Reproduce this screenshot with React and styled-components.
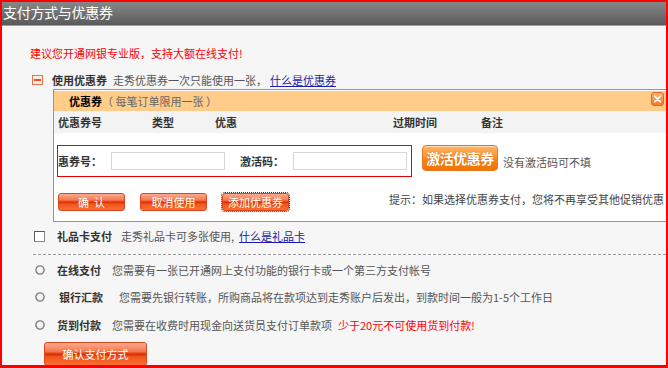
import React from "react";
import styled, { createGlobalStyle, css } from "styled-components";

const Global = createGlobalStyle`
  html, body { margin: 0; padding: 0; background: #fff; }
  body { font-family: "Noto Sans CJK SC", "Noto Sans", sans-serif; font-size: 11px; }
  input { font-family: inherit; }
`;

const Frame = styled.div`
  width: 668px;
  height: 368px;
  box-sizing: border-box;
  border: 2px solid #ff0000;
  border-bottom-width: 3px;
  background: #f6f6f6;
  overflow: hidden;
  font-size: 11px;
  line-height: 16px;
  color: #555;
`;

const TitleBar = styled.div`
  height: 21px;
  padding: 0 0 2px 1px;
  border-bottom: 1px solid #a0a0a0;
  background: linear-gradient(#878787, #5a5a5a);
  color: #fff;
  font-size: 14px;
  line-height: 21px;
  letter-spacing: -0.3px;
`;

const Notice = styled.div`
  margin: 19px 0 0 28px;
  color: #ff0000;
  line-height: 16px;
`;

const Row = styled.div`
  display: flex;
  align-items: center;
  height: 16px;
  margin-top: ${(p) => p.$mt || 0}px;
  padding-left: ${(p) => p.$pl || 0}px;
  white-space: nowrap;
`;

const Label = styled.span`
  font-weight: bold;
  color: #333;
  margin-left: ${(p) => p.$ml || 0}px;
  margin-right: ${(p) => p.$mr || 0}px;
`;

const Desc = styled.span`
  color: ${(p) => (p.$red ? "#ff0000" : "#555")};
  margin-left: ${(p) => p.$ml || 0}px;
`;

const Link = styled.a`
  color: #1a1aa8;
  text-decoration: underline;
  margin-left: ${(p) => p.$ml || 0}px;
  cursor: pointer;
`;

const IconBox = styled.span`
  display: inline-flex;
  margin-right: ${(p) => p.$mr || 0}px;
`;

const CheckBox = styled.span`
  display: inline-block;
  width: 11px;
  height: 11px;
  box-sizing: border-box;
  border: 1px solid #5a5a5a;
  border-right-color: #8a8a8a;
  border-bottom-color: #8a8a8a;
  background: #fff;
  margin-right: 12px;
`;

const Panel = styled.div`
  margin: 1px 0 0 51px;
  width: 616px;
  box-sizing: border-box;
  border: 1px solid #f07a3c;
  background: #fff;
`;

const PanelHead = styled.div`
  margin-top: 1px;
  height: 20px;
  background: #ffcc8a;
  display: flex;
  align-items: center;
  padding-left: 15px;
  color: #666;
`;

const PanelTitle = styled.span`
  font-weight: bold;
  color: #000;
`;

const Close = styled.span`
  margin-left: auto;
  margin-right: 4px;
  align-self: flex-start;
  margin-top: 1px;
  display: inline-flex;
`;

const ColumnRow = styled.div`
  height: 22px;
  background: #f3f3f3;
  display: flex;
  align-items: center;
  padding-left: 4px;
  font-weight: bold;
  color: #333;
`;

const Col = styled.span`
  width: ${(p) => p.$w}px;
  flex: none;
`;

const PanelBody = styled.div`
  padding: 12px 0 9px 3px;
`;

const CodeLine = styled.div`
  display: flex;
  align-items: flex-start;
`;

const CodeBox = styled.div`
  display: flex;
  align-items: center;
  width: 355px;
  height: 32px;
  box-sizing: border-box;
  border: 1px solid #e80000;
`;

const FieldLabel = styled.span`
  font-weight: bold;
  color: #333;
  margin-left: ${(p) => p.$ml || 0}px;
`;

const Field = styled.input`
  width: 114px;
  height: 18px;
  box-sizing: border-box;
  border: 1px solid #d6d6d6;
  background: #fff;
  margin: 0 0 0 9px;
  padding: 0 2px;
  outline: none;
`;

const ActivateButton = styled.button`
  margin-left: 10px;
  width: 76px;
  height: 26px;
  padding: 0;
  border: 1px solid #e8761e;
  border-radius: 4px;
  background: linear-gradient(#ffb666, #ff9430 45%, #ff8414 55%, #f07400);
  color: #fff;
  font-family: inherit;
  font-size: 14px;
  font-weight: bold;
  line-height: 24px;
  letter-spacing: -0.5px;
  text-shadow: 0 0 1px #b85000;
  box-shadow: inset 0 1px 0 rgba(255, 255, 255, 0.5);
`;

const NoCode = styled.span`
  margin: 9px 0 0 5px;
  color: #555;
`;

const BtnRow = styled.div`
  display: flex;
  align-items: center;
  gap: 15px;
  margin-top: 14px;
  padding-left: 1px;
  white-space: nowrap;
`;

const redGloss = css`
  border: 1px solid #d9481c;
  border-radius: 3px;
  background: linear-gradient(
    #fbaa90 0%,
    #f6784f 38%,
    #e84418 47%,
    #d83000 52%,
    #f25420 62%,
    #fa6e30 100%
  );
  color: #fff;
  font-family: inherit;
  font-size: 11px;
  padding: 0;
`;

const SmallButton = styled.button`
  ${redGloss};
  width: 67px;
  height: 18px;
  line-height: 16px;
  ${(p) =>
    p.$focused &&
    css`
      outline: 1px dotted #333;
      outline-offset: 0;
    `}
`;

const Hint = styled.span`
  margin-left: 85px;
  margin-bottom: 5px;
  color: #444;
`;

const Dashed = styled.div`
  margin: 10px 0 0 31px;
  border-top: 1px dashed #9a9a9a;
`;

const PayButton = styled.button`
  ${redGloss};
  display: block;
  margin: 9px 0 0 42px;
  width: 103px;
  height: 24px;
  line-height: 22px;
`;

const MinusIcon = () => (
  <svg width="11" height="10" viewBox="0 0 11 10">
    <rect x="0.5" y="0.5" width="10" height="9" fill="#fdeee6" stroke="#e8704a" />
    <rect x="2" y="4" width="7" height="2" fill="#e8542a" />
  </svg>
);

const RadioIcon = () => (
  <svg width="10" height="10" viewBox="0 0 10 10">
    <defs>
      <radialGradient id="rg" cx="0.4" cy="0.4" r="0.6">
        <stop offset="0" stopColor="#ffffff" />
        <stop offset="1" stopColor="#eaeaea" />
      </radialGradient>
    </defs>
    <circle cx="5" cy="5" r="4.1" fill="url(#rg)" stroke="#7e7e7e" strokeWidth="1.4" />
  </svg>
);

const CloseIcon = () => (
  <svg width="13" height="14" viewBox="0 0 13 14">
    <defs>
      <linearGradient id="cg" x1="0" y1="0" x2="0" y2="1">
        <stop offset="0" stopColor="#ffb070" />
        <stop offset="1" stopColor="#f07a2a" />
      </linearGradient>
    </defs>
    <rect x="0.5" y="0.5" width="12" height="13" rx="2.5" fill="url(#cg)" stroke="#e86a20" />
    <path d="M3.8 4.3 L9.2 9.7 M9.2 4.3 L3.8 9.7" stroke="#fff" strokeWidth="1.8" strokeLinecap="round" />
  </svg>
);

export default function App() {
  return (
    <>
      <Global />
      <Frame>
        <TitleBar>支付方式与优惠券</TitleBar>
        <Notice>建议您开通网银专业版，支持大额在线支付!</Notice>

        <Row $mt={11} $pl={30}>
          <IconBox $mr={9}>
            <MinusIcon />
          </IconBox>
          <Label $mr={6}>使用优惠券</Label>
          <Desc>走秀优惠券一次只能使用一张，</Desc>
          <Link $ml={3}>什么是优惠券</Link>
        </Row>

        <Panel>
          <PanelHead>
            <PanelTitle>优惠券</PanelTitle>（ 每笔订单限用一张 ）
            <Close>
              <CloseIcon />
            </Close>
          </PanelHead>
          <ColumnRow>
            <Col $w={94}>优惠券号</Col>
            <Col $w={63}>类型</Col>
            <Col $w={178}>优惠</Col>
            <Col $w={88}>过期时间</Col>
            <Col $w={40}>备注</Col>
          </ColumnRow>
          <PanelBody>
            <CodeLine>
              <CodeBox>
                <FieldLabel>惠券号：</FieldLabel>
                <Field type="text" />
                <FieldLabel $ml={15}>激活码：</FieldLabel>
                <Field type="text" />
              </CodeBox>
              <ActivateButton>激活优惠券</ActivateButton>
              <NoCode>没有激活码可不填</NoCode>
            </CodeLine>
            <BtnRow>
              <SmallButton>确&nbsp;&nbsp;认</SmallButton>
              <SmallButton>取消使用</SmallButton>
              <SmallButton $focused>添加优惠券</SmallButton>
              <Hint>提示：如果选择优惠券支付，您将不再享受其他促销优惠</Hint>
            </BtnRow>
          </PanelBody>
        </Panel>

        <Row $mt={6} $pl={32}>
          <CheckBox />
          <Label $mr={9}>礼品卡支付</Label>
          <Desc>走秀礼品卡可多张使用,</Desc>
          <Link $ml={5}>什么是礼品卡</Link>
        </Row>

        <Dashed />

        <Row $mt={7} $pl={33}>
          <IconBox $mr={12}>
            <RadioIcon />
          </IconBox>
          <Label $mr={11}>在线支付</Label>
          <Desc>您需要有一张已开通网上支付功能的银行卡或一个第三方支付帐号</Desc>
        </Row>
        <Row $mt={11} $pl={33}>
          <IconBox $mr={12}>
            <RadioIcon />
          </IconBox>
          <Label $ml={2} $mr={16}>银行汇款</Label>
          <Desc>您需要先银行转账，所购商品将在款项达到走秀账户后发出，到款时间一般为1-5个工作日</Desc>
        </Row>
        <Row $mt={12} $pl={33}>
          <IconBox $mr={12}>
            <RadioIcon />
          </IconBox>
          <Label $mr={11}>货到付款</Label>
          <Desc>您需要在收费时用现金向送货员支付订单款项</Desc>
          <Desc $red $ml={6}>少于20元不可使用货到付款!</Desc>
        </Row>

        <PayButton>确认支付方式</PayButton>
      </Frame>
    </>
  );
}
